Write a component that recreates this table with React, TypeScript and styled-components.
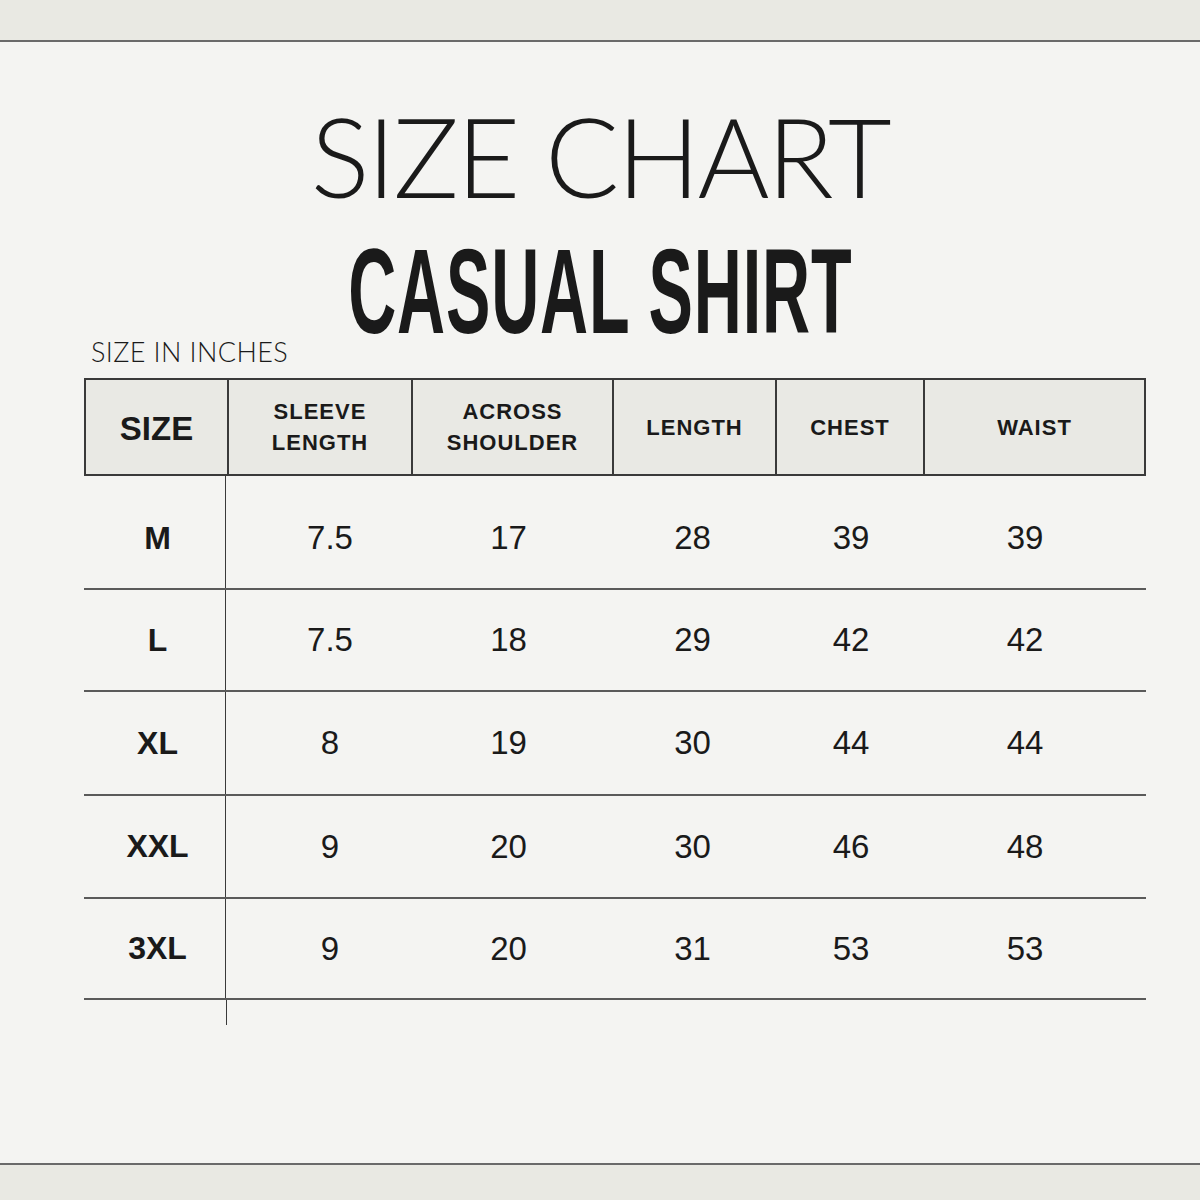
import styled, { createGlobalStyle } from "styled-components";

const GlobalStyle = createGlobalStyle`
  html, body {
    margin: 0;
    padding: 0;
    background: #f4f4f2;
  }
`;

const Page = styled.div`
  width: 1200px;
  height: 1200px;
  display: flex;
  flex-direction: column;
  background: #f4f4f2;
  color: #1a1a1a;
  font-family: "Liberation Sans", Arial, sans-serif;
`;

const Band = styled.div<{ $bottom?: boolean }>`
  height: ${(p) => (p.$bottom ? 35 : 40)}px;
  background: #e9e9e3;
  ${(p) =>
    p.$bottom ? "border-top: 2px solid #6a6a6a;" : "border-bottom: 2px solid #6a6a6a;"}
`;

const Main = styled.div`
  flex: 1;
  display: flex;
  flex-direction: column;
`;

const Heading = styled.h1`
  margin: 58px 0 0 0;
  text-align: center;
  font-family: Lato, "Open Sans", sans-serif;
  font-weight: 300;
  font-size: 110px;
  line-height: 110px;
  letter-spacing: -2.5px;
`;

const SubHeading = styled.h2`
  margin: 31px 0 0 0;
  display: flex;
  justify-content: center;
  font-family: "Liberation Sans", Arial, sans-serif;
  font-weight: 700;
  font-size: 121px;
  line-height: 100px;
  height: 100px;

  span {
    display: inline-block;
    transform: scaleX(0.55);
    letter-spacing: 1.5px;
  }
`;

const Units = styled.div`
  margin: -5px 0 0 91px;
  font-family: Lato, "Open Sans", sans-serif;
  font-weight: 300;
  font-size: 27px;
  line-height: 32px;
  letter-spacing: 0.4px;
`;

const Table = styled.div`
  margin: 10px 0 0 84px;
  width: 1062px;
`;

const HeaderRow = styled.div`
  display: grid;
  grid-template-columns: 141px 184px 201px 163px 148px 221px;
  height: 98px;
  box-sizing: border-box;
  border: 2px solid #3a3a3a;
  background: #e9e9e4;
`;

const HeaderCell = styled.div<{ $big?: boolean }>`
  display: flex;
  align-items: center;
  justify-content: center;
  text-align: center;
  box-sizing: border-box;
  border-left: 2px solid #3a3a3a;
  font-weight: 700;
  font-size: ${(p) => (p.$big ? 33 : 22)}px;
  line-height: 31px;
  letter-spacing: ${(p) => (p.$big ? 0 : 1)}px;
  padding-top: ${(p) => (p.$big ? 2 : 0)}px;

  &:first-child {
    border-left: none;
  }
`;

const Row = styled.div<{ $h: number }>`
  display: grid;
  grid-template-columns: 142px 184px 201px 163px 148px 224px;
  height: ${(p) => p.$h}px;
  box-sizing: border-box;
  border-bottom: 2px solid #5a5a5a;
`;

const SizeCell = styled.div<{ $top: number }>`
  display: flex;
  align-items: center;
  justify-content: center;
  border-right: 1.5px solid #3a3a3a;
  font-weight: 700;
  font-size: 32px;
  padding: ${(p) => p.$top}px 0 0 6px;
`;

const ValueCell = styled.div<{ $dx: number; $top: number }>`
  display: flex;
  align-items: center;
  justify-content: center;
  font-size: 33px;
  padding-top: ${(p) => p.$top}px;
  padding-left: ${(p) => Math.max(p.$dx, 0)}px;
  padding-right: ${(p) => Math.max(-p.$dx, 0)}px;
`;

const Tail = styled.div`
  width: 142px;
  height: 25px;
  border-right: 1.5px solid #3a3a3a;
`;

const Spacer = styled.div`
  flex: 1;
`;

const headers = [
  { label: "SIZE", big: true },
  { label: "SLEEVE\nLENGTH" },
  { label: "ACROSS\nSHOULDER" },
  { label: "LENGTH" },
  { label: "CHEST" },
  { label: "WAIST" },
];

const rows = [
  { size: "M", h: 114, top: 12, values: ["7.5", "17", "28", "39", "39"] },
  { size: "L", h: 102, top: 0, values: ["7.5", "18", "29", "42", "42"] },
  { size: "XL", h: 104, top: 0, values: ["8", "19", "30", "44", "44"] },
  { size: "XXL", h: 103, top: 0, values: ["9", "20", "30", "46", "48"] },
  { size: "3XL", h: 101, top: 0, values: ["9", "20", "31", "53", "53"] },
];

// horizontal nudge of each value column (the chart isn't centred exactly)
const offsets = [24, -4, 0, 6, -18];

export default function App() {
  return (
    <>
      <GlobalStyle />
      <Page>
        <Band />
        <Main>
          <Heading>SIZE CHART</Heading>
          <SubHeading>
            <span>CASUAL SHIRT</span>
          </SubHeading>
          <Units>SIZE IN INCHES</Units>
          <Table>
            <HeaderRow>
              {headers.map((h) => (
                <HeaderCell key={h.label} $big={h.big}>
                  <div>
                    {h.label.split("\n").map((line) => (
                      <div key={line}>{line}</div>
                    ))}
                  </div>
                </HeaderCell>
              ))}
            </HeaderRow>
            {rows.map((r) => (
              <Row key={r.size} $h={r.h}>
                <SizeCell $top={r.top}>{r.size}</SizeCell>
                {r.values.map((v, i) => (
                  <ValueCell key={i} $dx={offsets[i]} $top={r.top}>
                    {v}
                  </ValueCell>
                ))}
              </Row>
            ))}
            <Tail />
          </Table>
          <Spacer />
        </Main>
        <Band $bottom />
      </Page>
    </>
  );
}
